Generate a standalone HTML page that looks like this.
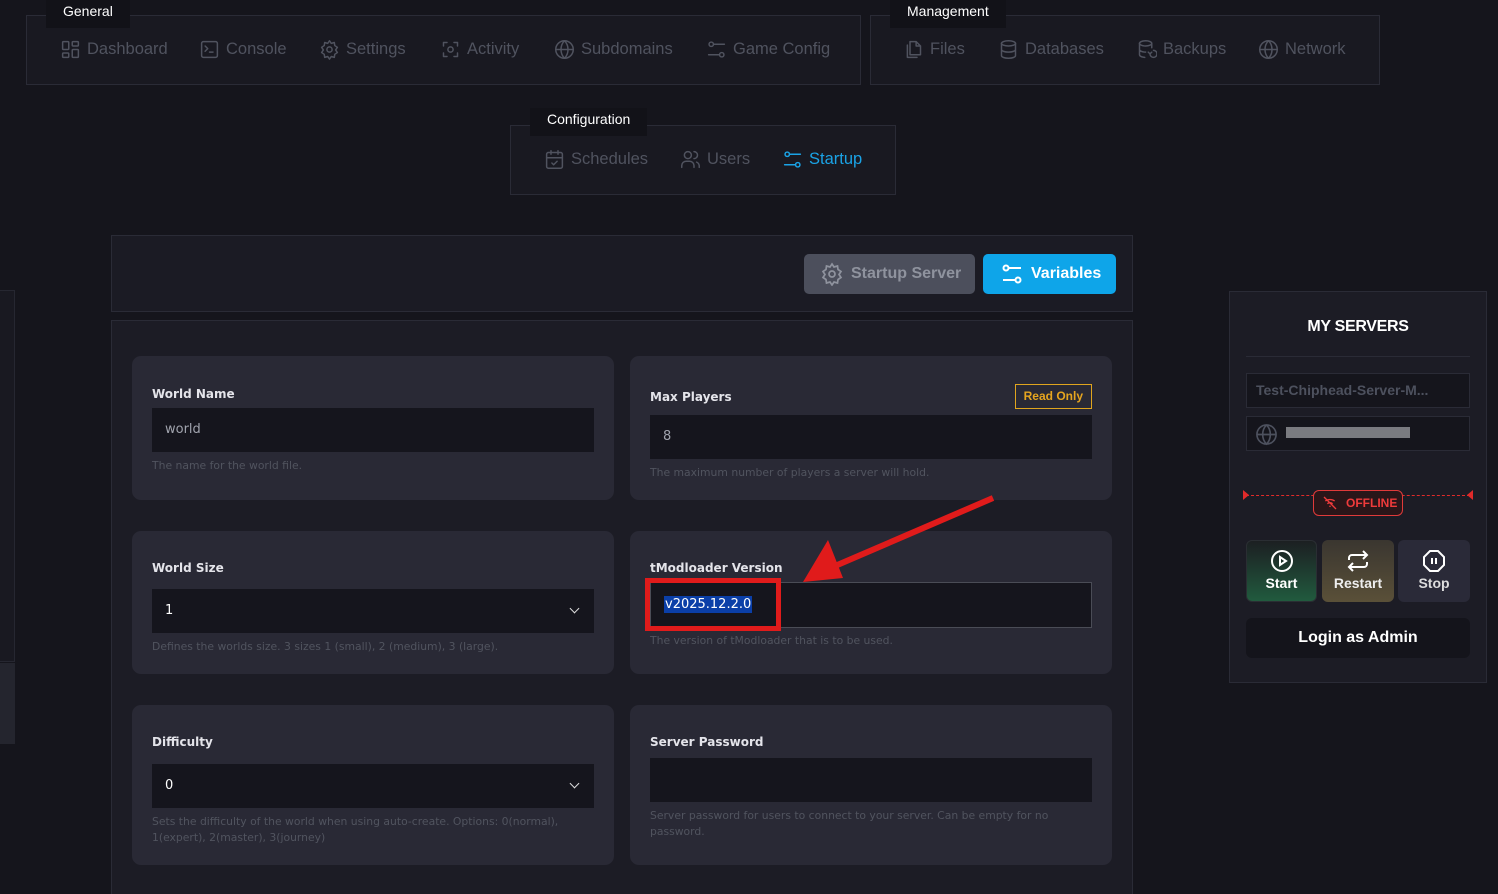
<!DOCTYPE html><html style="overflow:hidden;width:1498px;height:894px"><head><meta charset="utf-8"><style>
*{box-sizing:border-box;margin:0;padding:0}
body{width:1498px;height:894px;background:#15151c;font-family:"Liberation Sans",sans-serif;position:relative;overflow:hidden;color:#fff}
.a{position:absolute}
.box{position:absolute;border:1px solid #2a2b36;background:#191921}
.lbl{position:absolute;background:#121218;color:#fff;font-size:14px;height:28px;line-height:22px;padding:0 17px}
.nav{position:absolute;display:flex;align-items:center;color:#50535f;font-size:16.5px;top:24px;height:22px;gap:6px;white-space:nowrap}
.nav svg{width:21px;height:21px;fill:none;stroke:#50535f;stroke-width:1.7;stroke-linecap:round;stroke-linejoin:round}
.card{position:absolute;background:#292935;border-radius:9px;font-family:"DejaVu Sans",sans-serif}
.card h4{position:absolute;left:20px;font-size:12px;color:#e4e4ea;font-weight:bold}
.inp{position:absolute;left:20px;right:20px;height:44px;background:#15151d;font-size:13px;color:#a0a3ad;padding-left:13px;line-height:44px}
.help{position:absolute;left:20px;right:40px;font-size:10.8px;color:#51545f;line-height:16px}
.chev{position:absolute;right:16px;top:16px;width:7px;height:7px;border-right:1.6px solid #ddd;border-bottom:1.6px solid #ddd;transform:rotate(45deg)}
</style></head><body>
<div class="box" style="left:26px;top:15px;width:835px;height:70px"></div>
<div class="lbl" style="left:46px;top:0">General</div>
<div class="nav" style="left:60px;top:38px">
<svg viewBox="0 0 24 24"><rect x="3" y="3" width="7" height="9" rx="1"/><rect x="14" y="3" width="7" height="5" rx="1"/><rect x="14" y="12" width="7" height="9" rx="1"/><rect x="3" y="16" width="7" height="5" rx="1"/></svg>Dashboard</div>
<div class="nav" style="left:199px;top:38px"><svg viewBox="0 0 24 24"><rect x="3" y="3" width="18" height="18" rx="2"/><path d="M7 8l3 3-3 3M12 15h4"/></svg>Console</div>
<div class="nav" style="left:319px;top:38px"><svg viewBox="0 0 24 24"><circle cx="12" cy="12" r="3"/><path d="M12 2l2 3 3.5-1 .5 3.5 3 2-2 3 2 3-3 2-.5 3.5-3.5-1-2 3-2-3-3.5 1-.5-3.5-3-2 2-3-2-3 3-2 .5-3.5 3.5 1z"/></svg>Settings</div>
<div class="nav" style="left:440px;top:38px"><svg viewBox="0 0 24 24"><path d="M4 8V4h4M16 4h4v4M20 16v4h-4M8 20H4v-4"/><circle cx="12" cy="12" r="3"/></svg>Activity</div>
<div class="nav" style="left:554px;top:38px"><svg viewBox="0 0 24 24"><circle cx="12" cy="12" r="10"/><path d="M2 12h20M12 2c3 3 4 7 4 10s-1 7-4 10c-3-3-4-7-4-10s1-7 4-10"/></svg>Subdomains</div>
<div class="nav" style="left:706px;top:38px"><svg viewBox="0 0 24 24"><circle cx="6" cy="6" r="2.5"/><path d="M9 6h12M3 18h12"/><circle cx="18" cy="18" r="2.5"/></svg>Game Config</div>

<div class="box" style="left:870px;top:15px;width:510px;height:70px"></div>
<div class="lbl" style="left:890px;top:0">Management</div>
<div class="nav" style="left:903px;top:38px"><svg viewBox="0 0 24 24"><path d="M8 3h7l5 5v10H8zM15 3v5h5M5 7v14h11"/></svg>Files</div>
<div class="nav" style="left:998px;top:38px"><svg viewBox="0 0 24 24"><ellipse cx="12" cy="5" rx="8" ry="3"/><path d="M4 5v14c0 1.7 3.6 3 8 3s8-1.3 8-3V5M4 12c0 1.7 3.6 3 8 3s8-1.3 8-3"/></svg>Databases</div>
<div class="nav" style="left:1136px;top:38px"><svg viewBox="0 0 24 24"><ellipse cx="11" cy="5" rx="7" ry="3"/><path d="M4 5v13c0 1.5 2.5 2.7 6 3M18 5v5M4 12c0 1.5 3 3 7 3M14 15l2 2 2-2M16 17a4 4 0 1 0 4-4"/></svg>Backups</div>
<div class="nav" style="left:1258px;top:38px"><svg viewBox="0 0 24 24"><circle cx="12" cy="12" r="10"/><path d="M2 12h20M12 2c3 3 4 7 4 10s-1 7-4 10c-3-3-4-7-4-10s1-7 4-10"/></svg>Network</div>

<div class="box" style="left:510px;top:125px;width:386px;height:70px"></div>
<div class="lbl" style="left:530px;top:108px">Configuration</div>
<div class="nav" style="left:544px;top:148px"><svg viewBox="0 0 24 24"><rect x="3" y="4" width="18" height="18" rx="2"/><path d="M3 10h18M8 2v4M16 2v4M9 16l2 2 4-4"/></svg>Schedules</div>
<div class="nav" style="left:680px;top:148px"><svg viewBox="0 0 24 24"><circle cx="9" cy="7" r="4"/><path d="M2 21v-2a5 5 0 0 1 5-5h4a5 5 0 0 1 5 5v2M16 3a4 4 0 0 1 0 8M22 21v-2a5 5 0 0 0-3-4"/></svg>Users</div>
<div class="nav" style="left:782px;top:148px;color:#1aa3e6"><svg viewBox="0 0 24 24" style="stroke:#1aa3e6"><circle cx="6" cy="6" r="2.5"/><path d="M9 6h12M3 18h12"/><circle cx="18" cy="18" r="2.5"/></svg>Startup</div>

<div class="box" style="left:111px;top:235px;width:1022px;height:77px;background:#1b1b24"></div>
<div class="a" style="left:804px;top:254px;width:171px;height:40px;background:#4c4f5c;border-radius:5px;color:#8f939e;font-size:16px;font-weight:bold;line-height:40px;padding-left:47px">Startup Server</div>
<svg class="a" style="left:820px;top:262px" width="24" height="24" viewBox="0 0 24 24" fill="none" stroke="#8f939e" stroke-width="1.7"><circle cx="12" cy="12" r="3"/><path d="M12 2l2 3 3.5-1 .5 3.5 3 2-2 3 2 3-3 2-.5 3.5-3.5-1-2 3-2-3-3.5 1-.5-3.5-3-2 2-3-2-3 3-2 .5-3.5 3.5 1z"/></svg>
<div class="a" style="left:983px;top:254px;width:133px;height:40px;background:#0ea5e9;border-radius:5px;color:#fff;font-size:16px;font-weight:bold;line-height:40px;padding-left:48px">Variables</div>
<svg class="a" style="left:1000px;top:262px" width="24" height="24" viewBox="0 0 24 24" fill="none" stroke="#fff" stroke-width="2"><circle cx="6" cy="6" r="2.5"/><path d="M9 6h12M3 18h12"/><circle cx="18" cy="18" r="2.5"/></svg>

<div class="box" style="left:111px;top:320px;width:1022px;height:574px;background:#1c1c25;border-bottom:none"></div>

<div class="card" style="left:132px;top:356px;width:482px;height:144px"><h4 style="top:31px">World Name</h4><div class="inp" style="top:52px">world</div><div class="help" style="top:102px">The name for the world file.</div></div>
<div class="card" style="left:630px;top:356px;width:482px;height:144px"><h4 style="top:34px">Max Players</h4>
<div class="a" style="right:20px;top:28px;border:1px solid #e0a51e;color:#e6a51f;font-size:12px;font-weight:bold;padding:0 8px;height:25px;line-height:23px;font-family:'Liberation Sans',sans-serif">Read Only</div>
<div class="inp" style="top:59px">8</div><div class="help" style="top:109px">The maximum number of players a server will hold.</div></div>
<div class="card" style="left:132px;top:531px;width:482px;height:143px"><h4 style="top:30px">World Size</h4><div class="inp" style="top:58px;color:#fff">1<div class="chev"></div></div><div class="help" style="top:108px">Defines the worlds size. 3 sizes 1 (small), 2 (medium), 3 (large).</div></div>
<div class="card" style="left:630px;top:531px;width:482px;height:143px"><h4 style="top:30px">tModloader Version</h4><div class="inp" style="top:51px;border:1px solid #4a4c56;height:46px;line-height:44px"><span style="background:#0b3fa8;color:#fff;padding:1px 1px">v2025.12.2.0</span></div><div class="help" style="top:102px">The version of tModloader that is to be used.</div></div>
<div class="card" style="left:132px;top:705px;width:482px;height:160px"><h4 style="top:30px">Difficulty</h4><div class="inp" style="top:59px;color:#fff">0<div class="chev"></div></div><div class="help" style="top:109px">Sets the difficulty of the world when using auto-create. Options: 0(normal), 1(expert), 2(master), 3(journey)</div></div>
<div class="card" style="left:630px;top:705px;width:482px;height:160px"><h4 style="top:30px">Server Password</h4><div class="inp" style="top:53px"></div><div class="help" style="top:103px">Server password for users to connect to your server. Can be empty for no password.</div></div>

<div class="a" style="left:645px;top:578px;width:136px;height:53px;border:5px solid #e01b1b"></div>
<svg class="a" style="left:795px;top:490px" width="210" height="100"><line x1="198" y1="8" x2="40" y2="76" stroke="#e01b1b" stroke-width="6"/><polygon points="8,92 33,50 48,88" fill="#e01b1b"/></svg>

<div class="a" style="left:0;top:290px;width:15px;height:372px;border:1px solid #262731;border-left:none;background:#191921"></div>
<div class="a" style="left:0;top:663px;width:15px;height:81px;background:#24252e"></div>

<div class="box" style="left:1229px;top:291px;width:258px;height:392px;background:#1c1c25"></div>
<div class="a" style="left:1229px;top:318px;width:258px;text-align:center;font-size:16px;font-weight:bold;letter-spacing:-0.3px">MY SERVERS</div>
<div class="a" style="left:1246px;top:356px;width:224px;height:1px;background:#2a2b36"></div>
<div class="a" style="left:1246px;top:373px;width:224px;height:35px;border:1px solid #2a2b36;background:#15151c;color:#4d515e;font-size:14px;font-weight:bold;line-height:33px;padding-left:9px">Test-Chiphead-Server-M...</div>
<div class="a" style="left:1246px;top:416px;width:224px;height:35px;border:1px solid #2a2b36;background:#15151c"></div>
<svg class="a" style="left:1255px;top:423px" width="23" height="23" viewBox="0 0 24 24" fill="none" stroke="#4d515e" stroke-width="1.7"><circle cx="12" cy="12" r="10"/><path d="M2 12h20M12 2c3 3 4 7 4 10s-1 7-4 10c-3-3-4-7-4-10s1-7 4-10"/></svg>
<div class="a" style="left:1286px;top:427px;width:124px;height:11px;background:#7a7b80"></div>
<div class="a" style="left:1246px;top:495px;width:224px;border-top:1px dashed #e02a2a"></div>
<div class="a" style="left:1243px;top:490px;width:0;height:0;border-top:5px solid transparent;border-bottom:5px solid transparent;border-left:6px solid #e02a2a"></div>
<div class="a" style="left:1467px;top:490px;width:0;height:0;border-top:5px solid transparent;border-bottom:5px solid transparent;border-right:6px solid #e02a2a"></div>
<div class="a" style="left:1313px;top:490px;width:90px;height:26px;border:1px solid #e03a3a;border-radius:6px;background:#2a1619;color:#ef3b3b;font-size:12px;font-weight:bold;line-height:24px;padding-left:32px">OFFLINE</div>
<svg class="a" style="left:1322px;top:495px" width="16" height="16" viewBox="0 0 24 24" fill="none" stroke="#ef3b3b" stroke-width="2"><path d="M3 3l18 18M5 9a12 12 0 0 1 14 0M8 13a7 7 0 0 1 8 0M11 17h2"/></svg>
<div class="a" style="left:1246px;top:540px;width:71px;height:62px;border-radius:6px;background:linear-gradient(#1c1f22,#215a3e);border:1px solid #2a2e33"></div>
<div class="a" style="left:1322px;top:540px;width:72px;height:62px;border-radius:6px;background:linear-gradient(#3a3630,#5a5038)"></div>
<div class="a" style="left:1398px;top:540px;width:72px;height:62px;border-radius:6px;background:#2a2a38"></div>
<svg class="a" style="left:1270px;top:549px" width="24" height="24" viewBox="0 0 24 24" fill="none" stroke="#fff" stroke-width="2"><circle cx="12" cy="12" r="10"/><path d="M10 8l6 4-6 4z"/></svg>
<svg class="a" style="left:1346px;top:549px" width="24" height="24" viewBox="0 0 24 24" fill="none" stroke="#fff" stroke-width="2"><path d="M17 2l4 4-4 4M3 11V9a3 3 0 0 1 3-3h15M7 22l-4-4 4-4M21 13v2a3 3 0 0 1-3 3H3"/></svg>
<svg class="a" style="left:1422px;top:549px" width="24" height="24" viewBox="0 0 24 24" fill="none" stroke="#fff" stroke-width="2"><path d="M8 2h8l6 6v8l-6 6H8l-6-6V8z"/><path d="M10 9v6M14 9v6"/></svg>
<div class="a" style="left:1246px;top:575px;width:71px;text-align:center;font-size:14px;font-weight:bold">Start</div>
<div class="a" style="left:1322px;top:575px;width:72px;text-align:center;font-size:14px;font-weight:bold;color:#eee">Restart</div>
<div class="a" style="left:1398px;top:575px;width:72px;text-align:center;font-size:14px;font-weight:bold;color:#ddd">Stop</div>
<div class="a" style="left:1246px;top:618px;width:224px;height:40px;border-radius:6px;background:#14141b;text-align:center;line-height:40px;font-size:16px;font-weight:bold">Login as Admin</div>
</body></html>
